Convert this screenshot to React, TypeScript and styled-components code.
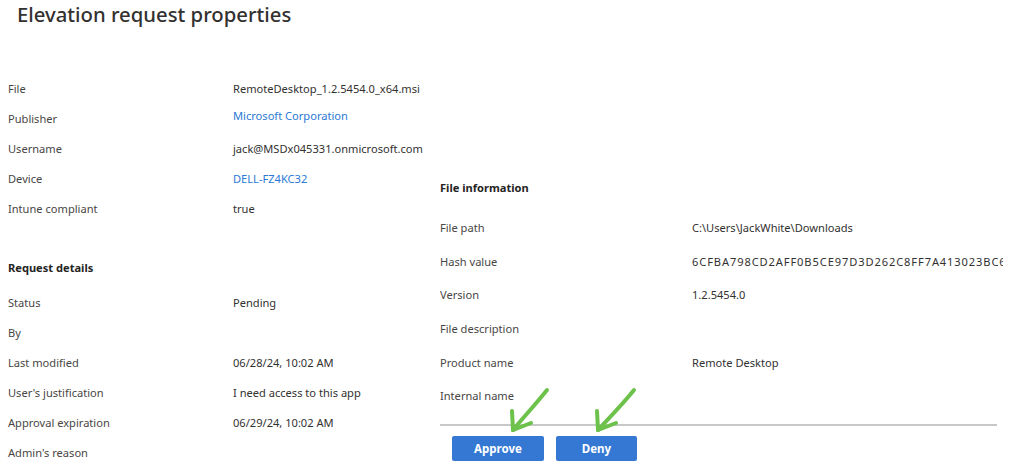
import React from 'react';
import styled, { createGlobalStyle } from 'styled-components';

interface Field {
  label: string;
  value?: string;
  link?: boolean;
}

const deviceFields: Field[] = [
  { label: 'File', value: 'RemoteDesktop_1.2.5454.0_x64.msi' },
  { label: 'Publisher', value: 'Microsoft Corporation', link: true },
  { label: 'Username', value: 'jack@MSDx045331.onmicrosoft.com' },
  { label: 'Device', value: 'DELL-FZ4KC32', link: true },
  { label: 'Intune compliant', value: 'true' }
];

const requestFields: Field[] = [
  { label: 'Status', value: 'Pending' },
  { label: 'By' },
  { label: 'Last modified', value: '06/28/24, 10:02 AM' },
  { label: "User's justification", value: 'I need access to this app' },
  { label: 'Approval expiration', value: '06/29/24, 10:02 AM' },
  { label: "Admin's reason" }
];

const fileFields: Field[] = [
  { label: 'File path', value: 'C:\\Users\\JackWhite\\Downloads' },
  { label: 'Hash value', value: '6CFBA798CD2AFF0B5CE97D3D262C8FF7A413023BC6E0A7D41F2C9B58E3' },
  { label: 'Version', value: '1.2.5454.0' },
  { label: 'File description' },
  { label: 'Product name', value: 'Remote Desktop' },
  { label: 'Internal name' }
];

const App: React.FC = () => {
  return (
    <>
      <GlobalStyle />
      <Page>
        <Title>Elevation request properties</Title>
        <Columns>
          <LeftColumn>
            {deviceFields.map((f) => (
              <LeftRow key={f.label}>
                <LeftLabel>{f.label}</LeftLabel>
                <Value $link={f.link} $raised={f.label === 'Publisher'}>{f.value}</Value>
              </LeftRow>
            ))}
            <SectionHeading $gap={30} $after={4}>Request details</SectionHeading>
            {requestFields.map((f) => (
              <LeftRow key={f.label}>
                <LeftLabel>{f.label}</LeftLabel>
                <Value>{f.value}</Value>
              </LeftRow>
            ))}
          </LeftColumn>

          <RightColumn>
            <SectionHeading $gap={0} $after={8}>File information</SectionHeading>
            {fileFields.map((f) => (
              <RightRow key={f.label}>
                <RightLabel>{f.label}</RightLabel>
                <Value $hash={f.label === 'Hash value'}>{f.value}</Value>
              </RightRow>
            ))}
            <Divider />
            <Actions>
              <ActionButton type="button" $wide>Approve</ActionButton>
              <ActionButton type="button">Deny</ActionButton>
            </Actions>
          </RightColumn>
        </Columns>

        <Arrows width="1024" height="466" viewBox="0 0 1024 466">
          <g stroke="#6cc24a" strokeWidth="4" strokeLinecap="round" strokeLinejoin="round" fill="none">
            <path d="M547 390 C535 405 523 418 513 430" />
            <path d="M513 430 L512 411" />
            <path d="M513 430 L531 423" />
            <path d="M634 390 C622 405 609 418 598 430" />
            <path d="M598 430 L597 411" />
            <path d="M598 430 L616 423" />
          </g>
        </Arrows>
      </Page>
    </>
  );
};

const GlobalStyle = createGlobalStyle`
  html, body {
    margin: 0;
    padding: 0;
    background: #ffffff;
  }
  body {
    font-family: "Noto Sans", "Open Sans", "Liberation Sans", sans-serif;
    color: #323130;
  }
`;

const Page = styled.div`
  position: relative;
  width: 1024px;
  height: 466px;
  overflow: hidden;
  padding-left: 8px;
  box-sizing: border-box;
`;

const Title = styled.h1`
  margin: 0 0 0 9px;
  font-size: 20.3px;
  font-weight: 500;
  line-height: 28px;
  color: #323130;
`;

const Columns = styled.div`
  display: flex;
  align-items: flex-start;
  margin-top: 45px;
`;

const LeftColumn = styled.div`
  width: 432px;
  flex-shrink: 0;
`;

const LeftRow = styled.div`
  display: flex;
  height: 30px;
  align-items: center;
  font-size: 11.1px;
`;

const LeftLabel = styled.span`
  width: 225px;
  flex-shrink: 0;
  color: #484644;
`;

const Value = styled.span<{ $link?: boolean; $raised?: boolean; $hash?: boolean }>`
  color: ${({ $link }) => ($link ? '#2b79d4' : '#323130')};
  white-space: nowrap;
  position: relative;
  top: ${({ $raised }) => ($raised ? '-3px' : '0')};
  letter-spacing: ${({ $hash }) => ($hash ? '0.9px' : '0')};
`;

const SectionHeading = styled.div<{ $gap: number; $after: number }>`
  margin-top: ${({ $gap }) => $gap}px;
  margin-bottom: ${({ $after }) => $after}px;
  height: 30px;
  line-height: 30px;
  font-size: 11.1px;
  font-weight: 700;
  color: #252423;
`;

const RightColumn = styled.div`
  width: 563px;
  overflow: hidden;
  padding-top: 100px;
`;

const RightRow = styled.div`
  display: flex;
  height: 33.6px;
  align-items: center;
  font-size: 11.1px;
`;

const RightLabel = styled.span`
  width: 252px;
  flex-shrink: 0;
  color: #484644;
`;

const Divider = styled.div`
  width: 557px;
  height: 2px;
  margin-top: 11px;
  background: #c8c8c8;
`;

const Actions = styled.div`
  display: flex;
  gap: 12px;
  margin: 10px 0 0 12px;
`;

const ActionButton = styled.button<{ $wide?: boolean }>`
  min-width: ${({ $wide }) => ($wide ? '92px' : '81px')};
  height: 25px;
  padding: 0 18px;
  border: none;
  border-radius: 2px;
  background: #3478d4;
  color: #ffffff;
  font-family: inherit;
  font-size: 11.5px;
  font-weight: 700;
  cursor: pointer;
`;

const Arrows = styled.svg`
  position: absolute;
  left: 0;
  top: 0;
  pointer-events: none;
`;

export default App;
